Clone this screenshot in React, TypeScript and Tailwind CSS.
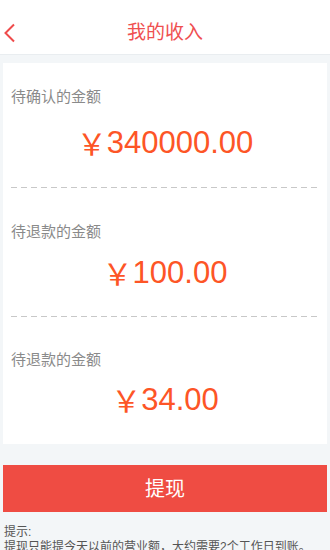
import React from 'react';

const sections = [
  { label: '待确认的金额', amount: '340000.00', pad: 'pt-[25px] pb-[27px]', gap: 'mt-[18px]' },
  { label: '待退款的金额', amount: '100.00', pad: 'pt-[35px] pb-[26px]', gap: 'mt-[13px]' },
  { label: '待退款的金额', amount: '34.00', pad: 'pt-[34px] pb-[27px]', gap: 'mt-[12px]' },
];

export default function App() {
  return (
    <div className="h-[550px] overflow-hidden bg-[#f3f6f8] font-['Liberation_Sans','Noto_Sans_CJK_SC',sans-serif]">
      <div className="relative h-[55px] bg-white border-b border-[#e9edf0] flex justify-center pt-[22px]">
        <svg className="absolute left-[3px] top-[23px]" width="13" height="20" viewBox="0 0 13 20" fill="none">
          <path d="M11 1.5 L2.5 10 L11 18.5" stroke="#ef4b4b" strokeWidth="2" />
        </svg>
        <h1 className="text-[19px] text-[#ef5050] leading-[22px] h-[22px]">我的收入</h1>
      </div>

      <div className="mx-[3px] mt-[8px] bg-white">
        {sections.map((s, i) => (
          <div key={i}>
            {i > 0 && (
              <div className="mx-[8px] h-px bg-[repeating-linear-gradient(90deg,#c8c8c8_0_6px,transparent_6px_10px)]" />
            )}
            <div className={`px-[8px] ${s.pad}`}>
              <p className="text-[15px] leading-[18px] h-[18px] text-[#8a8a8a]">{s.label}</p>
              <div className={`${s.gap} h-[36px] flex items-center justify-center text-[31px] leading-none text-[#fd5526]`}>
                <span className="font-['Noto_Sans_CJK_SC',sans-serif] text-[30px] leading-none">￥</span>
                <span className="leading-none">{s.amount}</span>
              </div>
            </div>
          </div>
        ))}
      </div>

      <button className="mx-[3px] mt-[21px] w-[324px] h-[47px] bg-[#ef4c43] text-white text-[20px] flex items-center justify-center">
        提现
      </button>

      <div className="px-[4px] mt-[13px] text-[12px] leading-[15px] text-[#555]">
        <p>提示:</p>
        <p>提现只能提今天以前的营业额，大约需要2个工作日到账。</p>
      </div>
    </div>
  );
}
